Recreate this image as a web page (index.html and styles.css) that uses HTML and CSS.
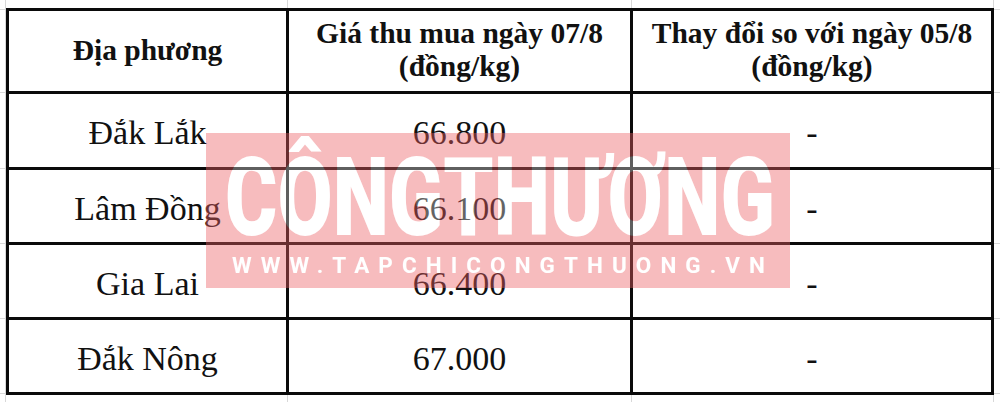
FILE: index.html
```html
<!DOCTYPE html>
<html lang="vi">
<head>
<meta charset="utf-8">
<title>Giá cà phê</title>
<link rel="stylesheet" href="styles.css">
</head>
<body>
<div class="sheet">
  <div class="grid">
    <div class="cell head">Địa phương</div>
    <div class="cell head">Giá thu mua ngày 07/8<br>(đồng/kg)</div>
    <div class="cell head">Thay đổi so với ngày 05/8<br>(đồng/kg)</div>

    <div class="cell">Đắk Lắk</div>
    <div class="cell">66.800</div>
    <div class="cell">-</div>

    <div class="cell">Lâm Đồng</div>
    <div class="cell">66.100</div>
    <div class="cell">-</div>

    <div class="cell">Gia Lai</div>
    <div class="cell">66.400</div>
    <div class="cell">-</div>

    <div class="cell">Đắk Nông</div>
    <div class="cell">67.000</div>
    <div class="cell">-</div>
  </div>

  <svg class="watermark" width="584" height="155" viewBox="0 0 584 155" aria-hidden="true">
    <defs>
      <mask id="cut" maskUnits="userSpaceOnUse" x="0" y="0" width="584" height="155">
        <rect width="584" height="155" fill="#fff"/>
        <text class="wm-big" x="19" y="102" textLength="550" lengthAdjust="spacingAndGlyphs" fill="#000">CÔNGTHƯƠNG</text>
        <text class="wm-url" x="26" y="140" textLength="533" lengthAdjust="spacing" fill="#000">WWW.TAPCHICONGTHUONG.VN</text>
      </mask>
    </defs>
    <rect class="wm-bg" width="584" height="155" mask="url(#cut)"/>
    <text class="wm-big wm-fill" x="19" y="102" textLength="550" lengthAdjust="spacingAndGlyphs">CÔNGTHƯƠNG</text>
    <text class="wm-url wm-fill" x="26" y="140" textLength="533" lengthAdjust="spacing">WWW.TAPCHICONGTHUONG.VN</text>
  </svg>
</div>
</body>
</html>
```

FILE: styles.css
```css
html, body {
  margin: 0;
  padding: 0;
}

body {
  width: 1000px;
  height: 402px;
  overflow: hidden;
  background-color: #fff;
  background-image:
    linear-gradient(#d8d8d8, #d8d8d8),
    linear-gradient(#d8d8d8, #d8d8d8),
    linear-gradient(#d8d8d8, #d8d8d8),
    linear-gradient(#d8d8d8, #d8d8d8),
    linear-gradient(#d8d8d8, #d8d8d8),
    linear-gradient(#d8d8d8, #d8d8d8),
    linear-gradient(#d8d8d8, #d8d8d8),
    linear-gradient(#d8d8d8, #d8d8d8),
    linear-gradient(#d8d8d8, #d8d8d8),
    linear-gradient(#d8d8d8, #d8d8d8);
  background-repeat: no-repeat;
  background-size:
    1px 100%, 1px 100%, 1px 100%, 1px 100%,
    100% 1px, 100% 1px, 100% 1px, 100% 1px, 100% 1px, 100% 1px;
  background-position:
    5px 0, 287px 0, 631px 0, 993px 0,
    0 9px, 0 92px, 0 168px, 0 243px, 0 318px, 0 393px;
}

.sheet {
  position: relative;
  padding: 8px 0 0 6px;
}

.grid {
  display: grid;
  box-sizing: border-box;
  width: 988px;
  grid-template-columns: 277px 341px 358px;
  grid-template-rows: 80px 73px 72px 72px 72px;
  gap: 3px;
  padding: 3px;
  background: #0a0a0a;
}

.cell {
  background: #fff;
  display: flex;
  align-items: center;
  justify-content: center;
  text-align: center;
  box-sizing: border-box;
  padding-top: 5px;
  font-family: "Liberation Serif", "Times New Roman", serif;
  font-size: 34px;
  line-height: 38px;
  color: #111;
}

.head {
  padding-top: 0;
  padding-bottom: 2px;
  font-weight: 700;
  font-size: 29.5px;
  line-height: 33px;
}

.watermark {
  position: absolute;
  left: 206px;
  top: 133px;
  display: block;
}

.wm-bg {
  fill: rgb(235, 95, 100);
  fill-opacity: 0.42;
}

.wm-big {
  font-family: Roboto, "DejaVu Sans", sans-serif;
  font-weight: 900;
  font-size: 110px;
}

.wm-url {
  font-family: Roboto, "DejaVu Sans", sans-serif;
  font-weight: 700;
  font-size: 22.5px;
}

.wm-fill {
  fill: #fff;
  fill-opacity: 0.35;
}
```
